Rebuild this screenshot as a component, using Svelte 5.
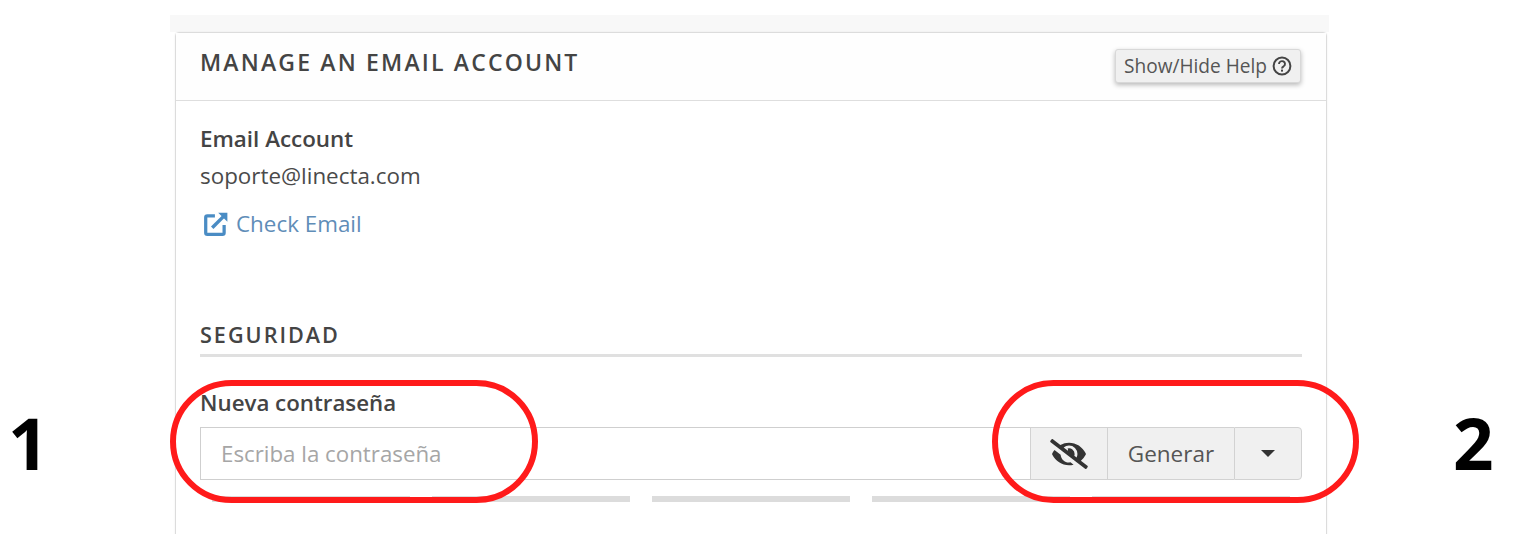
<script lang="ts">
  // cPanel style email account form with annotation marks on top
  let password = $state('');
  const strengthBars = [1, 2, 3, 4, 5];
</script>

<div class="page">
  <main class="shell">
    <section class="card">
      <header class="card-head">
        <h1>MANAGE AN EMAIL ACCOUNT</h1>
        <button class="help">
          Show/Hide Help
          <svg viewBox="0 0 20 20" width="20" height="20" aria-hidden="true">
            <circle cx="10" cy="10" r="8.4" fill="none" stroke="#444" stroke-width="2" />
            <path d="M7 8a3 2.800 0 1 1 4.600 2.300c-1.100.6-1.600 1-1.600 2.300" fill="none" stroke="#444" stroke-width="1.900" />
            <rect x="9" y="13.600" width="2" height="2" fill="#444" />
          </svg>
        </button>
      </header>

      <div class="card-body">
        <div class="account-label">Email Account</div>
        <div class="account-value">soporte@linecta.com</div>
        <a class="check" href="#check">
          <svg viewBox="0 0 24 24" width="26" height="26" aria-hidden="true">
            <path d="M11 4.500H4A1.500 1.500 0 0 0 2.500 6v14A1.500 1.500 0 0 0 4 21.500h14a1.500 1.500 0 0 0 1.500-1.500v-7" fill="none" stroke="#4a8cc4" stroke-width="3" />
            <path d="M8.500 15.500 19.500 4.500" fill="none" stroke="#4a8cc4" stroke-width="3.200" />
            <path d="M14 1.500h8.500V10z" fill="#4a8cc4" />
          </svg>
          Check Email
        </a>

        <h2>SEGURIDAD</h2>

        <label for="pw">Nueva contraseña</label>
        <div class="input-group">
          <input id="pw" type="password" placeholder="Escriba la contraseña" bind:value={password} />
          <button class="addon eye" aria-label="Show password">
            <svg viewBox="0 0 640 512" width="38" height="30" aria-hidden="true">
              <path d="M320 400c-75.850 0-137.250-58.710-142.900-133.110L72.200 185.820c-13.790 17.300-26.480 35.590-36.720 55.590a32.350 32.350 0 0 0 0 29.190C89.710 376.410 197.070 448 320 448c26.910 0 52.870-4 77.890-10.460L346 397.390a144.130 144.130 0 0 1-26 2.610zm313.820 58.100l-110.550-85.440a331.250 331.250 0 0 0 81.250-102.070 32.350 32.350 0 0 0 0-29.190C550.290 135.590 442.930 64 320 64a308.150 308.150 0 0 0-147.320 37.700L45.460 3.370A16 16 0 0 0 23 6.180L3.370 31.450A16 16 0 0 0 6.180 53.900l588.360 454.730a16 16 0 0 0 22.460-2.810l19.640-25.270a16 16 0 0 0-2.820-22.450zm-183.720-142l-39.300-30.380A94.750 94.750 0 0 0 416 256a94.760 94.760 0 0 0-121.310-92.210A47.650 47.650 0 0 1 304 192a46.640 46.640 0 0 1-1.540 10l-73.610-56.890A142.310 142.310 0 0 1 320 112a143.920 143.920 0 0 1 144 144c0 21.630-5.290 41.790-13.900 60.110z" fill="#333" />
            </svg>
          </button>
          <button class="addon generate">Generar</button>
          <button class="addon caret" aria-label="Options"><span></span></button>
        </div>

        <div class="strength">
          {#each strengthBars as bar (bar)}
            <div class="bar"></div>
          {/each}
        </div>
      </div>
    </section>
  </main>

  <!-- annotations drawn over the screenshot -->
  <div class="ring ring-one"></div>
  <div class="ring ring-two"></div>
  <div class="mark mark-one">1</div>
  <div class="mark mark-two">2</div>
</div>

<style>
  :global(body) {
    margin: 0;
    background: #fff;
  }

  .page {
    position: relative;
    height: 534px;
    overflow: hidden;
    font-family: "Open Sans", "Noto Sans", sans-serif;
    color: #3c3c3c;
  }

  .shell {
    width: 1159px;
    height: 519px;
    margin: 15px 0 0 170px;
    padding: 17px 2px 0 5px;
    box-sizing: border-box;
    background: linear-gradient(#f8f8f8 0, #f8f8f8 17px, #fff 17px);
  }

  .card {
    height: 520px;
    background: #fff;
    border: 1px solid #dcdcdc;
    border-radius: 4px;
    box-shadow: 0 0 2px rgba(0, 0, 0, 0.08);
  }

  .card-head {
    display: flex;
    justify-content: space-between;
    align-items: flex-start;
    height: 67px;
    padding: 0 25px;
    background: #fefefe;
    border-bottom: 1px solid #dedede;
  }

  h1 {
    margin: 13px 0 0 -1px;
    font-size: 23px;
    line-height: 32px;
    font-weight: 600;
    letter-spacing: 2.170px;
    color: #444;
  }

  .help {
    display: flex;
    align-items: center;
    gap: 5px;
    height: 34px;
    margin-top: 16px;
    padding: 0 8px;
    font: 400 19.100px "Open Sans", sans-serif;
    color: #555;
    background: #f0f0f0;
    border: 1px solid #d8d8d8;
    border-radius: 3px;
    box-shadow: 0 2px 5px rgba(0, 0, 0, 0.28);
  }

  .card-body {
    padding: 23px 24px 0 24px;
  }

  .account-label {
    font-size: 22.400px;
    line-height: 30px;
    font-weight: 600;
    color: #444;
  }

  .account-value {
    margin-top: 7px;
    font-size: 22.400px;
    line-height: 30px;
    color: #4a4a4a;
  }

  .check {
    display: flex;
    align-items: center;
    gap: 7px;
    margin-top: 18px;
    padding-left: 3px;
    font-size: 22.400px;
    line-height: 30px;
    color: #5f8db8;
    text-decoration: none;
  }

  h2 {
    margin: 81px 0 0;
    padding-bottom: 4px;
    font-size: 21.600px;
    line-height: 30px;
    font-weight: 600;
    letter-spacing: 2px;
    color: #444;
    border-bottom: 3px solid #e0e0e0;
  }

  label {
    display: block;
    margin-top: 31px;
    font-size: 22.300px;
    line-height: 30px;
    font-weight: 600;
    color: #444;
  }

  .input-group {
    display: flex;
    height: 53px;
    margin-top: 9px;
  }

  input {
    flex: 1;
    min-width: 0;
    padding: 0 20px;
    font: 400 22.300px "Open Sans", sans-serif;
    color: #444;
    background: #fff;
    border: 1px solid #cfcfcf;
    border-right: none;
    outline: none;
  }

  input::placeholder {
    color: #a6a6a6;
    opacity: 1;
  }

  .addon {
    display: flex;
    align-items: center;
    justify-content: center;
    padding: 0;
    font: 400 22.500px "Open Sans", sans-serif;
    color: #555;
    background: #f0f0f0;
    border: 1px solid #d2d2d2;
    border-right: none;
  }

  .eye { width: 77px; }
  .generate { width: 127px; }

  .caret {
    width: 68px;
    border-right: 1px solid #d2d2d2;
    border-radius: 0 4px 4px 0;
  }

  .caret span {
    width: 0;
    height: 0;
    border-left: 7px solid transparent;
    border-right: 7px solid transparent;
    border-top: 7px solid #333;
  }

  .strength {
    display: grid;
    grid-template-columns: repeat(5, 198px);
    gap: 22px;
    margin-top: 16px;
    padding-left: 12px;
  }

  .bar {
    height: 6px;
    background: #dcdcdc;
  }

  .ring {
    position: absolute;
    box-sizing: border-box;
    border: 6px solid #ff1a1a;
    border-radius: 62px;
  }

  .ring-one {
    left: 170px;
    top: 380px;
    width: 368px;
    height: 123px;
  }

  .ring-two {
    left: 992px;
    top: 380px;
    width: 367px;
    height: 123px;
  }

  .mark {
    position: absolute;
    top: 401px;
    font-size: 71px;
    line-height: 84px;
    font-weight: 700;
    color: #000;
  }

  .mark-one { left: 8px; }
  .mark-two { left: 1453px; }
</style>
